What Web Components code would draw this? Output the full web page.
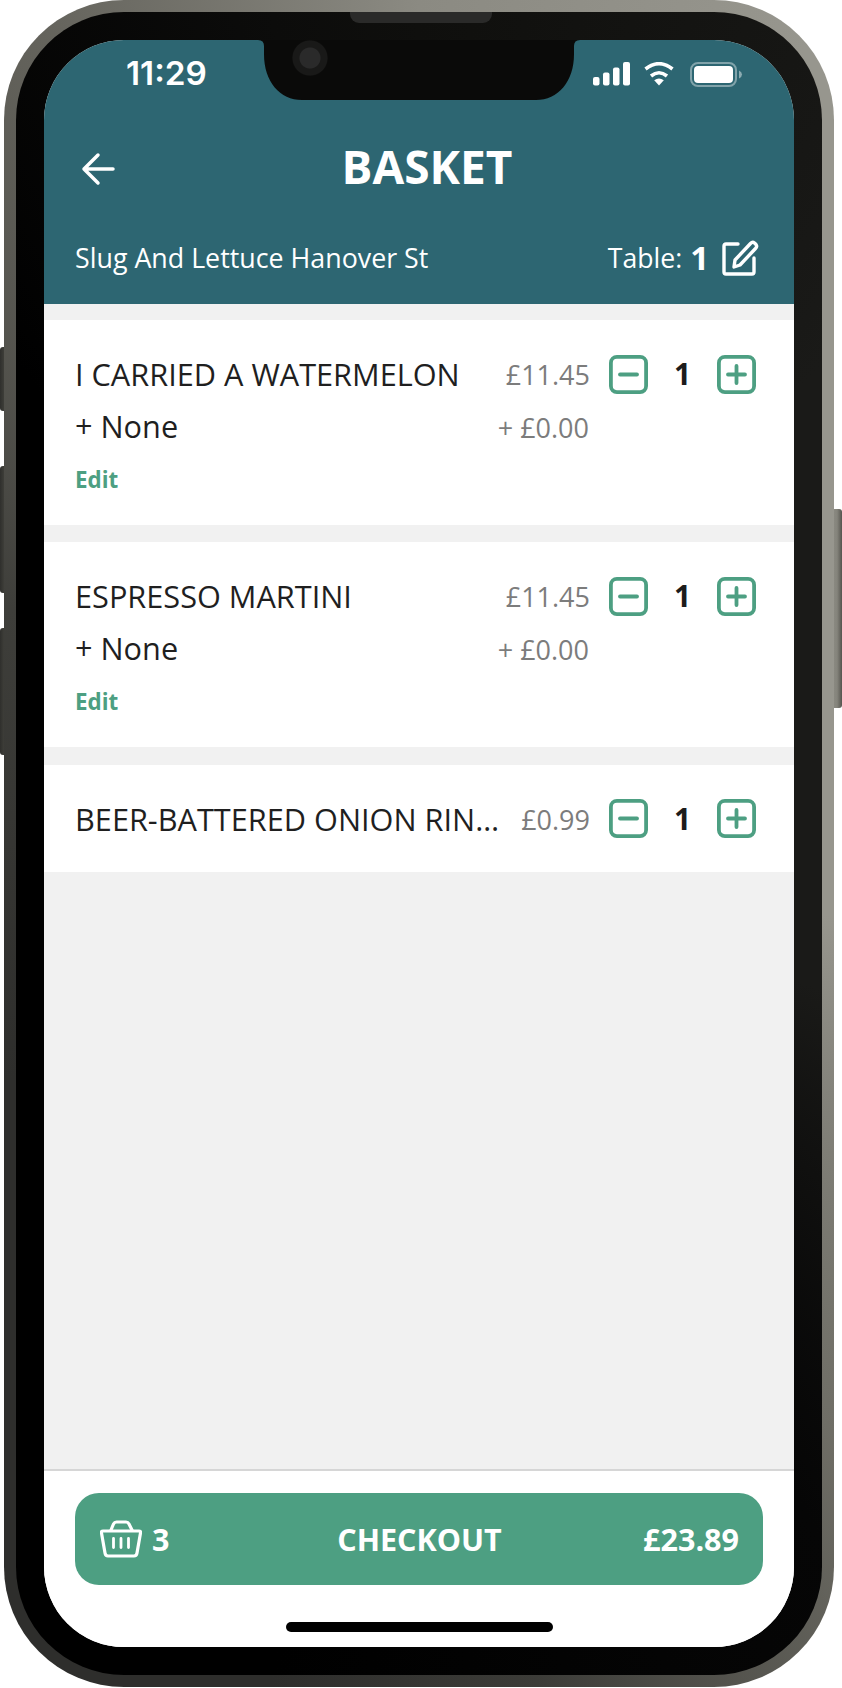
<!DOCTYPE html>
<html lang="en">
<head>
<meta charset="utf-8">
<title>Basket</title>
<style>
  html, body { margin: 0; padding: 0; background: #fff; }
  body { font-family: "Open Sans", sans-serif; }
</style>
</head>
<body>
<phone-frame>
  <status-bar time="11:29"></status-bar>
  <basket-header venue="Slug And Lettuce Hanover St" table="1">BASKET</basket-header>
  <basket-list>
    <basket-item price="£11.45" quantity="1" extra="+ None" extra-price="+ £0.00" editable>I CARRIED A WATERMELON</basket-item>
    <basket-item price="£11.45" quantity="1" extra="+ None" extra-price="+ £0.00" editable>ESPRESSO MARTINI</basket-item>
    <basket-item price="£0.99" quantity="1">BEER-BATTERED ONION RINGS</basket-item>
  </basket-list>
  <checkout-bar count="3" total="£23.89"></checkout-bar>
</phone-frame>

<script>
  class PhoneFrame extends HTMLElement {
    constructor () {
      super()
      this.shadow = this.attachShadow({ mode: 'open' })
      this.shadow.innerHTML =
      /*html*/`
        <style>
          *{ box-sizing: border-box; }
          :host {
            display: block;
            box-sizing: border-box;
            position: relative;
            width: 842px;
            height: 1688px;
            padding: 0 8px 1px 4px;
          }
          .side {
            position: absolute;
            border-radius: 3px 0 0 3px;
            left: 0;
            width: 6px;
            background: linear-gradient(90deg, #2f2f2c, #45453f);
          }
          .side.right {
            left: auto;
            right: 0;
            top: 509px;
            height: 199px;
            width: 10px;
            border-radius: 0 3px 3px 0;
            background: linear-gradient(90deg, #8c8b83, #85847c 50%, #55544e);
          }
          .band {
            position: relative;
            height: 100%;
            padding: 12px;
            border-radius: 120px;
            background: conic-gradient(#8b8a82 0deg, #97968e 26deg, #97968e 100deg, #6f6e66 145deg, #3c3c38 172deg, #2e2e2c 190deg, #2e2e2c 240deg, #3e3e3a 300deg, #64635c 335deg, #8b8a82 360deg);
          }
          .bezel {
            position: relative;
            height: 100%;
            padding: 28px;
            border-radius: 108px;
            background: conic-gradient(#0f0f0d 0deg, #1a1a18 40deg, #1a1a18 110deg, #060606 150deg, #000 190deg, #000 320deg, #0c0c0b 350deg, #0f0f0d 360deg);
          }
          .speaker {
            position: absolute;
            left: 334px;
            top: 0;
            width: 142px;
            height: 11px;
            border-radius: 0 0 9px 9px;
            background: #2a2a29;
          }
          .screen {
            display: flex;
            flex-direction: column;
            height: 100%;
            overflow: hidden;
            border-radius: 80px;
            background: #f1f1f1;
          }
        </style>
        <div class="side" style="top:347px;height:64px"></div>
        <div class="side" style="top:466px;height:127px"></div>
        <div class="side" style="top:628px;height:127px"></div>
        <div class="side right"></div>
        <div class="band">
          <div class="bezel">
            <div class="speaker"></div>
            <div class="screen"><slot></slot></div>
          </div>
        </div>
      `
    }
  }

  class StatusBar extends HTMLElement {
    constructor () {
      super()
      this.shadow = this.attachShadow({ mode: 'open' })
    }

    connectedCallback () {
      this.shadow.innerHTML =
      /*html*/`
        <style>
          *{ box-sizing: border-box; }
          :host {
            display: flex;
            box-sizing: border-box;
            flex: none;
            align-items: flex-start;
            height: 60px;
            background: #2d6672;
            color: #fff;
          }
          .time {
            width: 214px;
            padding: 12px 0 0 82px;
            font: 600 33.300px/42px Inter, sans-serif;
          }
          .notch {
            flex: none;
            position: relative;
            width: 322px;
            height: 60px;
          }
          .notch svg { display: block; }
          .camera {
            position: absolute;
            left: 34px;
            top: 0;
            width: 36px;
            height: 36px;
            border-radius: 50%;
            background: radial-gradient(circle, #2a2a2a 0 10px, #191918 11px 17px, #0d0d0c 18px);
          }
          .icons {
            display: flex;
            align-items: flex-start;
            gap: 13px;
            padding: 22px 0 0 13px;
          }
          .icons svg { display: block; }
        </style>
        <div class="time">${this.getAttribute('time')}</div>
        <div class="notch">
          <svg width="322" height="60" viewBox="0 0 322 60">
            <path fill="#0a0a09" d="M0 0Q6 0 6 6V14C6 42 22 60 44 60H278C300 60 316 42 316 14V6Q316 0 322 0Z"/>
          </svg>
          <div class="camera"></div>
        </div>
        <div class="icons">
          <svg width="37" height="24" viewBox="0 0 37 24" fill="#fff">
            <rect x="0" y="15" width="6.5" height="8.5" rx="2"/>
            <rect x="10" y="10.5" width="6.5" height="13" rx="2"/>
            <rect x="20" y="5.5" width="6.5" height="18" rx="2"/>
            <rect x="30" y="0" width="7" height="23.5" rx="2"/>
          </svg>
          <svg width="32" height="24" viewBox="0 0 32 24" fill="none" stroke="#fff" stroke-width="3.6">
            <path d="M2.5 7Q16-3.6 29.5 7"/>
            <path d="M8 14Q16 7.5 24 14"/>
            <path fill="#fff" stroke="none" d="M11.2 18.2Q16 15 20.8 18.2L16 23.5Z"/>
          </svg>
          <svg style="margin-left:2px" width="53" height="25" viewBox="0 0 53 25" fill="none">
            <rect x="1" y="1" width="45" height="23" rx="7" stroke="#fff" stroke-opacity=".4" stroke-width="2"/>
            <rect x="4" y="4" width="39" height="17" rx="4" fill="#fff"/>
            <path d="M49 8.5Q52 10 52 12.5T49 16.500Z" fill="#fff" fill-opacity=".45"/>
          </svg>
        </div>
      `
    }
  }

  class BasketHeader extends HTMLElement {
    constructor () {
      super()
      this.shadow = this.attachShadow({ mode: 'open' })
    }

    connectedCallback () {
      this.shadow.innerHTML =
      /*html*/`
        <style>
          *{ box-sizing: border-box; }
          :host {
            display: block;
            box-sizing: border-box;
            flex: none;
            height: 204px;
            background: #2d6672;
            color: #fff;
            font-family: "Open Sans", sans-serif;
          }
          .title-row {
            display: flex;
            align-items: center;
            height: 60px;
            margin-top: 36px;
            padding-left: 36px;
          }
          .back { display: block; flex: none; margin-top: 6px; }
          h1 {
            flex: 1;
            margin: 0;
            padding-right: 55px;
            font-size: 46px;
            line-height: 60px;
            font-weight: 700;
            text-align: center;
          }
          .sub-row {
            display: flex;
            align-items: center;
            justify-content: space-between;
            height: 52px;
            margin-top: 36px;
            padding: 0 35px 0 31px;
          }
          .venue { font-size: 26.800px; line-height: 36px; }
          .table { display: flex; align-items: center; font-size: 26.600px; line-height: 36px; }
          .table b { margin-left: 8px; font-size: 33px; font-weight: 700; }
          .table svg { display: block; margin-left: 12px; }
        </style>
        <div class="title-row">
          <svg class="back" width="35" height="36" viewBox="0 0 35 36" fill="none" stroke="#fff" stroke-width="3.5" stroke-linecap="round" stroke-linejoin="round">
            <path d="M33 18H4M18 4 4 18 18 32"/>
          </svg>
          <h1><slot></slot></h1>
        </div>
        <div class="sub-row">
          <span class="venue">${this.getAttribute('venue')}</span>
          <span class="table">Table:<b>${this.getAttribute('table')}</b>
            <svg width="38" height="38" viewBox="0 0 38 38" fill="none" stroke="#fff" stroke-width="3.4" stroke-linecap="round" stroke-linejoin="round">
              <path d="M17 5H5Q3 5 3 7V33Q3 35 5 35H31Q33 35 33 33V19"/>
              <path d="M13 28 14 21 29.500 4.500Q31.500 2.500 33.500 4L35 5.500Q36.500 7.500 34.500 9.500L19 26Z"/>
            </svg>
          </span>
        </div>
      `
    }
  }

  class BasketList extends HTMLElement {
    constructor () {
      super()
      this.shadow = this.attachShadow({ mode: 'open' })
      this.shadow.innerHTML =
      /*html*/`
        <style>
          :host {
            display: flex;
            box-sizing: border-box;
            flex: 1;
            flex-direction: column;
            gap: 17.700px;
            padding-top: 16px;
            background: #f1f1f1;
          }
        </style>
        <slot></slot>
      `
    }
  }

  class QtyStepper extends HTMLElement {
    constructor () {
      super()
      this.shadow = this.attachShadow({ mode: 'open' })
    }

    connectedCallback () {
      this.shadow.innerHTML =
      /*html*/`
        <style>
          *{ box-sizing: border-box; }
          :host {
            display: flex;
            flex: none;
            align-items: center;
            font-family: "Open Sans", sans-serif;
          }
          svg { display: block; flex: none; }
          .qty {
            width: 69px;
            color: #1c1c1c;
            font-size: 30px;
            line-height: 38px;
            font-weight: 700;
            text-align: center;
          }
        </style>
        <svg width="39" height="39" viewBox="0 0 39 39" fill="none" stroke="#4d9f82" stroke-width="3.8" stroke-linecap="round">
          <rect x="1.900" y="1.900" width="35.200" height="35.200" rx="6"/>
          <path d="M11 19.500H28"/>
        </svg>
        <span class="qty">${this.getAttribute('value')}</span>
        <svg width="39" height="39" viewBox="0 0 39 39" fill="none" stroke="#4d9f82" stroke-width="3.8" stroke-linecap="round">
          <rect x="1.900" y="1.900" width="35.200" height="35.200" rx="6"/>
          <path d="M11 19.500H28M19.500 11V28"/>
        </svg>
      `
    }
  }

  class BasketItem extends HTMLElement {
    constructor () {
      super()
      this.shadow = this.attachShadow({ mode: 'open' })
    }

    connectedCallback () {
      const extra = this.hasAttribute('extra')
        ? /*html*/`
          <div class="extra">
            <span class="extra-name">${this.getAttribute('extra')}</span>
            <span class="extra-price">${this.getAttribute('extra-price')}</span>
          </div>`
        : ''
      const edit = this.hasAttribute('editable') ? '<div class="edit">Edit</div>' : ''

      this.shadow.innerHTML =
      /*html*/`
        <style>
          *{ box-sizing: border-box; }
          :host {
            display: block;
            box-sizing: border-box;
            flex: none;
            padding: 34.600px 38px 0 31px;
            height: ${this.hasAttribute('editable') ? '204.700px' : '107.600px'};
            background: #fff;
            color: #1f1f1f;
            font-family: "Open Sans", sans-serif;
          }
          .main {
            display: flex;
            align-items: center;
            height: 39px;
          }
          .name {
            flex: 1;
            min-width: 0;
            padding-top: 1px;
            overflow: hidden;
            white-space: nowrap;
            text-overflow: ellipsis;
            font-size: 30.700px;
            line-height: 39px;
          }
          .price {
            flex: none;
            margin: 1px 19px 0 20px;
            color: #7c7c7c;
            font-size: 27px;
            line-height: 39px;
          }
          .extra {
            display: flex;
            justify-content: space-between;
            align-items: baseline;
            height: 39px;
            margin-top: 13.400px;
            padding-right: 167px;
          }
          .extra-name { font-size: 30.700px; line-height: 39px; }
          .extra-price { color: #7c7c7c; font-size: 27px; line-height: 39px; }
          .edit {
            margin-top: 19px;
            color: #4d9f82;
            font-size: 22.400px;
            line-height: 29px;
            font-weight: 700;
          }
        </style>
        <div class="main">
          <div class="name"><slot></slot></div>
          <span class="price">${this.getAttribute('price')}</span>
          <qty-stepper value="${this.getAttribute('quantity')}"></qty-stepper>
        </div>
        ${extra}
        ${edit}
      `
    }
  }

  class CheckoutBar extends HTMLElement {
    constructor () {
      super()
      this.shadow = this.attachShadow({ mode: 'open' })
    }

    connectedCallback () {
      this.shadow.innerHTML =
      /*html*/`
        <style>
          *{ box-sizing: border-box; }
          :host {
            display: block;
            box-sizing: border-box;
            flex: none;
            height: 178px;
            padding: 22px 31px 0;
            background: #fff;
            border-top: 2px solid #d6d6d6;
            font-family: "Open Sans", sans-serif;
          }
          .button {
            display: grid;
            grid-template-columns: 1fr auto 1fr;
            align-items: center;
            height: 92px;
            padding: 0 24px 0 25px;
            border-radius: 24px;
            background: #4d9f82;
            color: #fff;
            font-size: 30.500px;
            font-weight: 700;
          }
          .count { display: flex; align-items: center; gap: 10px; }
          .count svg { display: block; }
          .label { font-size: 30.500px; }
          .total { text-align: right; }
          .home {
            width: 267px;
            height: 10px;
            margin: 37px auto 0;
            border-radius: 5px;
            background: #000;
          }
        </style>
        <div class="button">
          <span class="count">
            <svg width="42" height="38" viewBox="0 0 42 38" fill="none" stroke="#fff" stroke-width="3.2" stroke-linecap="round" stroke-linejoin="round">
              <path d="M3 11Q1 11 1.500 13L5 33Q5.500 36 8 36H34Q36.500 36 37 33L40.500 13Q41 11 39 11Z"/>
              <path d="M11 10 13.500 4Q14.500 2 16.500 2H26Q28 2 29 4L32 10"/>
              <path stroke-width="2.800" d="M13.500 18.500V27.500M21 18.500V27.500M28.500 18.500V27.500"/>
            </svg>
            ${this.getAttribute('count')}
          </span>
          <span class="label">CHECKOUT</span>
          <span class="total">${this.getAttribute('total')}</span>
        </div>
        <div class="home"></div>
      `
    }
  }

  customElements.define('phone-frame', PhoneFrame)
  customElements.define('status-bar', StatusBar)
  customElements.define('basket-header', BasketHeader)
  customElements.define('basket-list', BasketList)
  customElements.define('qty-stepper', QtyStepper)
  customElements.define('basket-item', BasketItem)
  customElements.define('checkout-bar', CheckoutBar)
</script>
</body>
</html>
